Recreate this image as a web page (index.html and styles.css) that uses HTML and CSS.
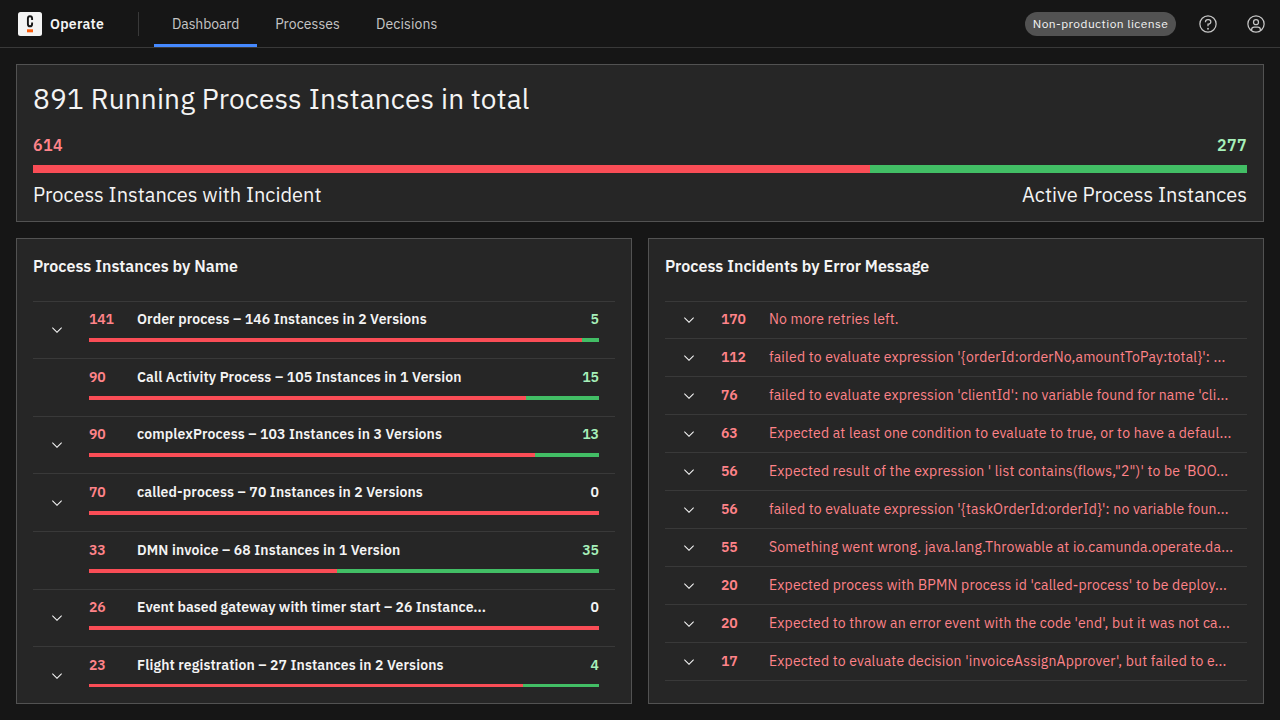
FILE: index.html
```html
<!DOCTYPE html>
<html lang="en">
<head>
<meta charset="utf-8">
<title>Operate: Dashboard</title>
<link rel="stylesheet" href="styles.css">
</head>
<body>
<svg class="defs" width="0" height="0" aria-hidden="true">
  <symbol id="chevron" viewBox="0 0 16 16"><path d="M8 11L3 6 3.7 5.3 8 9.6 12.3 5.3 13 6z"/></symbol>
</svg>
<header class="header">
  <a class="brand">
    <svg class="logo" viewBox="0 0 24 24"><rect width="24" height="24" rx="2.5" fill="#f4f4f4"/><path d="M14.1 8V6.6C14.1 5 13.3 4.2 12 4.2S9.9 5 9.9 6.6v5.3c0 1.6.8 2.4 2.1 2.4s2.1-.8 2.1-2.4v-1.4" fill="none" stroke="#161616" stroke-width="1.9"/><rect x="9" y="17.3" width="6" height="3" fill="#fc5d0d"/></svg>
    <span class="brand-name">Operate</span>
  </a>
  <nav class="nav">
    <a class="nav-item nav-active">Dashboard</a>
    <a class="nav-item">Processes</a>
    <a class="nav-item">Decisions</a>
  </nav>
  <div class="actions">
    <span class="tag">Non-production license</span>
    <svg class="action-icon" viewBox="0 0 32 32"><path d="M16,2A14,14,0,1,0,30,16,14,14,0,0,0,16,2Zm0,26A12,12,0,1,1,28,16,12,12,0,0,1,16,28Z"/><circle cx="16" cy="23.5" r="1.5"/><path d="M17,8H15.5A4.49,4.49,0,0,0,11,12.49V13h2v-.5A2.5,2.5,0,0,1,15.5,10H17a2.5,2.5,0,0,1,0,5H15v4.5h2V17a4.5,4.5,0,0,0,0-9Z"/></svg>
    <svg class="action-icon" viewBox="0 0 32 32"><path d="M16,8a5,5,0,1,0,5,5A5,5,0,0,0,16,8Zm0,8a3,3,0,1,1,3-3A3.0034,3.0034,0,0,1,16,16Z"/><path d="M16,2A14,14,0,1,0,30,16,14.0158,14.0158,0,0,0,16,2ZM10,26.3765V25a3.0033,3.0033,0,0,1,3-3h6a3.0033,3.0033,0,0,1,3,3v1.3765a11.8989,11.8989,0,0,1-12,0Zm13.9925-1.4507A5.0016,5.0016,0,0,0,19,20H13a5.0016,5.0016,0,0,0-4.9925,4.9258,12,12,0,1,1,15.985,0Z"/></svg>
  </div>
</header>
<main class="dashboard">
  <section class="card summary">
    <h1 class="total">891 Running Process Instances in total</h1>
    <div class="ends counts"><span class="red">614</span><span class="green">277</span></div>
    <div class="bar bar-large"><div class="bar-fill" style="width:68.911%"></div></div>
    <div class="ends labels"><span>Process Instances with Incident</span><span>Active Process Instances</span></div>
  </section>
  <section class="card panel">
    <h2 class="panel-title">Process Instances by Name</h2>
    <div class="scroll">
      <div class="process"><div class="toggle"><svg class="chevron"><use href="#chevron"/></svg></div><div class="process-body"><div class="process-line"><span class="num red">141</span><span class="name">Order process – 146 Instances in 2 Versions</span><span class="green">5</span></div><div class="bar"><div class="bar-fill" style="width:96.575%"></div></div></div></div>
      <div class="process"><div class="toggle"></div><div class="process-body"><div class="process-line"><span class="num red">90</span><span class="name">Call Activity Process – 105 Instances in 1 Version</span><span class="green">15</span></div><div class="bar"><div class="bar-fill" style="width:85.714%"></div></div></div></div>
      <div class="process"><div class="toggle"><svg class="chevron"><use href="#chevron"/></svg></div><div class="process-body"><div class="process-line"><span class="num red">90</span><span class="name">complexProcess – 103 Instances in 3 Versions</span><span class="green">13</span></div><div class="bar"><div class="bar-fill" style="width:87.379%"></div></div></div></div>
      <div class="process"><div class="toggle"><svg class="chevron"><use href="#chevron"/></svg></div><div class="process-body"><div class="process-line"><span class="num red">70</span><span class="name">called-process – 70 Instances in 2 Versions</span><span>0</span></div><div class="bar"><div class="bar-fill" style="width:100%"></div></div></div></div>
      <div class="process"><div class="toggle"></div><div class="process-body"><div class="process-line"><span class="num red">33</span><span class="name">DMN invoice – 68 Instances in 1 Version</span><span class="green">35</span></div><div class="bar"><div class="bar-fill" style="width:48.7%"></div></div></div></div>
      <div class="process"><div class="toggle"><svg class="chevron"><use href="#chevron"/></svg></div><div class="process-body"><div class="process-line"><span class="num red">26</span><span class="name name-truncated">Event based gateway with timer start – 26 Instance...</span><span>0</span></div><div class="bar"><div class="bar-fill" style="width:100%"></div></div></div></div>
      <div class="process"><div class="toggle"><svg class="chevron"><use href="#chevron"/></svg></div><div class="process-body"><div class="process-line"><span class="num red">23</span><span class="name">Flight registration – 27 Instances in 2 Versions</span><span class="green">4</span></div><div class="bar"><div class="bar-fill" style="width:85.185%"></div></div></div></div>
    </div>
  </section>
  <section class="card panel">
    <h2 class="panel-title">Process Incidents by Error Message</h2>
    <div class="scroll">
      <div class="incident"><div class="toggle"><svg class="chevron"><use href="#chevron"/></svg></div><div class="incident-line"><span class="num red">170</span><span class="message">No more retries left.</span></div></div>
      <div class="incident"><div class="toggle"><svg class="chevron"><use href="#chevron"/></svg></div><div class="incident-line"><span class="num red">112</span><span class="message">failed to evaluate expression '{orderId:orderNo,amountToPay:total}': ...</span></div></div>
      <div class="incident"><div class="toggle"><svg class="chevron"><use href="#chevron"/></svg></div><div class="incident-line"><span class="num red">76</span><span class="message">failed to evaluate expression 'clientId': no variable found for name 'cli...</span></div></div>
      <div class="incident"><div class="toggle"><svg class="chevron"><use href="#chevron"/></svg></div><div class="incident-line"><span class="num red">63</span><span class="message">Expected at least one condition to evaluate to true, or to have a defaul...</span></div></div>
      <div class="incident"><div class="toggle"><svg class="chevron"><use href="#chevron"/></svg></div><div class="incident-line"><span class="num red">56</span><span class="message">Expected result of the expression ' list contains(flows,"2")' to be 'BOO...</span></div></div>
      <div class="incident"><div class="toggle"><svg class="chevron"><use href="#chevron"/></svg></div><div class="incident-line"><span class="num red">56</span><span class="message">failed to evaluate expression '{taskOrderId:orderId}': no variable foun...</span></div></div>
      <div class="incident"><div class="toggle"><svg class="chevron"><use href="#chevron"/></svg></div><div class="incident-line"><span class="num red">55</span><span class="message">Something went wrong. java.lang.Throwable at io.camunda.operate.da...</span></div></div>
      <div class="incident"><div class="toggle"><svg class="chevron"><use href="#chevron"/></svg></div><div class="incident-line"><span class="num red">20</span><span class="message">Expected process with BPMN process id 'called-process' to be deploy...</span></div></div>
      <div class="incident"><div class="toggle"><svg class="chevron"><use href="#chevron"/></svg></div><div class="incident-line"><span class="num red">20</span><span class="message">Expected to throw an error event with the code 'end', but it was not ca...</span></div></div>
      <div class="incident"><div class="toggle"><svg class="chevron"><use href="#chevron"/></svg></div><div class="incident-line"><span class="num red">17</span><span class="message">Expected to evaluate decision 'invoiceAssignApprover', but failed to e...</span></div></div>
    </div>
  </section>
</main>
</body>
</html>
```
FILE: styles.css
```css
* { box-sizing: border-box; }
body {
  margin: 0;
  height: 720px;
  display: flex;
  flex-direction: column;
  overflow: hidden;
  background: #161616;
  color: #f4f4f4;
  font: 14px/18px "IBM Plex Sans", Roboto, "Noto Sans", sans-serif;
  letter-spacing: 0.16px;
}
.defs { position: absolute; }
h1, h2 { margin: 0; }

.header {
  flex: none;
  display: flex;
  height: 48px;
  border-bottom: 1px solid #393939;
}
.brand {
  display: flex;
  align-items: center;
  width: 138px;
  padding: 1px 0 0 18px;
  gap: 8px;
}
.logo { width: 24px; height: 24px; }
.brand-name { font-weight: 600; letter-spacing: 0.25px; }
.nav { display: flex; letter-spacing: 0.1px; }
.nav::before {
  content: "";
  width: 1px;
  height: 24px;
  margin: 12px 15px 0 0;
  background: #393939;
}
.nav-item {
  display: flex;
  align-items: center;
  padding: 4px 18px 0;
  border-bottom: 3px solid transparent;
  color: #c6c6c6;
}
.nav-active {
  border-bottom-color: #4589ff;
  letter-spacing: -0.12px;
}
.actions {
  display: flex;
  align-items: center;
  margin-left: auto;
  padding: 1px 14px 0 0;
  gap: 28px;
}
.tag {
  width: 151px;
  height: 24px;
  margin-right: -6px;
  border-radius: 12px;
  background: #525252;
  font-size: 12px;
  line-height: 24px;
  text-align: center;
  letter-spacing: 0.42px;
  white-space: nowrap;
}
.action-icon { width: 20px; height: 20px; fill: #c6c6c6; }

.dashboard {
  flex: 1;
  min-height: 0;
  display: grid;
  grid-template: 158px minmax(0, 1fr) / 1fr 1fr;
  gap: 16px;
  padding: 16px;
}
.card {
  border: 1px solid #525252;
  background: #262626;
  padding: 16px;
}
.summary { grid-column: 1 / -1; }
.total {
  font-size: 28px;
  line-height: 36px;
  font-weight: 400;
  letter-spacing: 0.16px;
}
.ends { display: flex; justify-content: space-between; }
.counts {
  margin: 17px 0 9px;
  font-size: 16px;
  line-height: 22px;
  font-weight: 600;
  letter-spacing: 0.4px;
}
.labels {
  margin-top: 8px;
  font-size: 20px;
  line-height: 28px;
  letter-spacing: 0.03px;
}
.red { color: #ff8389; }
.green { color: #a7f0ba; }
.bar { height: 4px; background: #42be65; }
.bar-large { height: 8px; }
.bar-fill { height: 100%; background: #fa4d56; }

.panel {
  display: flex;
  flex-direction: column;
  min-width: 0;
}
.panel-title {
  flex: none;
  height: 45.6px;
  font-size: 16px;
  line-height: 22px;
  font-weight: 600;
  letter-spacing: 0.02px;
}
.scroll {
  flex: 1;
  min-height: 0;
  overflow: hidden;
  border-top: 1px solid #393939;
}
.process {
  display: flex;
  height: 57.6px;
  padding-right: 16px;
  border-bottom: 1px solid #393939;
}
.toggle {
  flex: none;
  display: flex;
  align-items: center;
  width: 56px;
  padding: 0.4px 0 0 16px;
}
.chevron { width: 16px; height: 16px; fill: #f4f4f4; }
.process-body { flex: 1; min-width: 0; padding-top: 8.6px; }
.process-line {
  display: flex;
  height: 28px;
  font-weight: 600;
  letter-spacing: 0;
}
.num { flex: none; width: 48px; font-weight: 600; letter-spacing: -0.2px; }
.name { flex: 1; white-space: nowrap; letter-spacing: 0.12px; }
.name-truncated { letter-spacing: 0.05px; }

.incident {
  display: flex;
  align-items: center;
  height: 38px;
  border-bottom: 1px solid #393939;
}
.incident:first-child { height: 37.4px; }
.incident .toggle { height: 17px; padding-top: 1px; }
.incident-line { display: flex; padding-bottom: 1px; }
.message { color: #ff8389; white-space: nowrap; letter-spacing: 0.18px; }
```
